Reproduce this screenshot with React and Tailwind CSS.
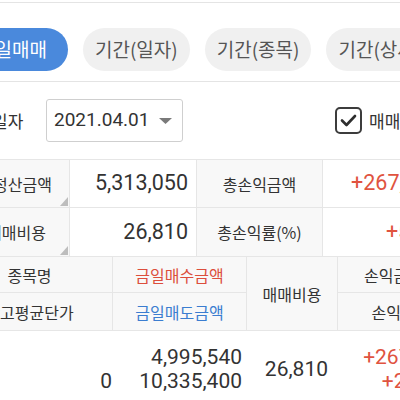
import React from "react";

function Corner() {
  return (
    <svg className="absolute right-[1px] bottom-[1px]" width="8" height="9" viewBox="0 0 8 9">
      <polygon points="8,0 8,9 0,9" fill="#bdbdbd" />
    </svg>
  );
}

export default function App() {
  const cell = "border-r border-b border-[#e6e6e6] flex items-center whitespace-nowrap";
  const num = "font-[Roboto,'Noto_Sans_CJK_KR',sans-serif]";
  const kr = "font-['Noto_Sans_CJK_KR',sans-serif]";
  const pill = "shrink-0 h-[43px] rounded-full bg-[#f0f0f0] text-[#555] text-[19px] flex items-center px-[12px]";
  return (
    <div className={`w-[400px] h-[400px] overflow-hidden bg-white text-[#333] ${kr}`}>
      <div className="h-[2px]" />
      {/* tabs */}
      <div className="border-t border-b border-[#e4e4e4] pt-[25px] pb-[10px]">
        <div className="flex gap-[15px] ml-[-35px] whitespace-nowrap">
          <div className="shrink-0 h-[43px] rounded-full bg-[#4a89dc] text-white text-[19px] flex items-center pl-[12px] pr-[21px]">
            금일매매
          </div>
          <div className={pill}>기간(일자)</div>
          <div className={pill}>기간(종목)</div>
          <div className={pill}>기간(상세)</div>
        </div>
      </div>
      {/* date row */}
      <div className="h-[77px] flex items-center whitespace-nowrap">
        <span className="shrink-0 w-[54px] ml-[-8px] text-[17px]">일자</span>
        <div className="shrink-0 w-[137px] h-[43px] border border-[#cfcfcf] rounded-[3px] flex items-center pl-[7px] pr-[10px] justify-between">
          <span className={`text-[19px] text-[#333] ${num}`}>2021.04.01</span>
          <svg width="13" height="6" viewBox="0 0 13 6">
            <polygon points="0,0 13,0 6.5,6" fill="#7a7a7a" />
          </svg>
        </div>
        <div className="shrink-0 ml-[152px] w-[27px] h-[27px] border-2 border-[#3c3c3c] rounded-[5px] flex items-center justify-center">
          <svg width="17" height="13" viewBox="0 0 17 13">
            <path d="M2 6.5 L6.5 11 L15 2" fill="none" stroke="#2e2e2e" strokeWidth="2.6" strokeLinecap="round" strokeLinejoin="round" />
          </svg>
        </div>
        <span className="shrink-0 ml-[7px] text-[17px] text-[#333]">매매내역</span>
      </div>
      {/* summary */}
      <div className="border-t border-[#e6e6e6] grid grid-cols-[70px_127px_126px_126px] grid-rows-[48px_49px] w-[449px]">
        <div className={`${cell} relative bg-[#f8f8f8] justify-end pr-[17px] overflow-hidden text-[16px]`}>
          총정산금액
          <Corner />
        </div>
        <div className={`${cell} justify-end pr-[8px] text-[21.5px] ${num}`}>5,313,050</div>
        <div className={`${cell} bg-[#f8f8f8] justify-center text-[16px]`}>총손익금액</div>
        <div className={`${cell} justify-end pr-[8px] text-[21.5px] text-[#e0533f] ${num}`}>+267,250</div>
        <div className={`${cell} relative bg-[#f8f8f8] justify-end pr-[23px] overflow-hidden text-[16px]`}>
          총매매비용
          <Corner />
        </div>
        <div className={`${cell} justify-end pr-[8px] text-[21.5px] ${num}`}>26,810</div>
        <div className={`${cell} bg-[#f8f8f8] justify-center text-[16px]`}>총손익률(%)</div>
        <div className={`${cell} justify-end pr-[8px] text-[21.5px] text-[#e0533f] ${num}`}>+5.35</div>
      </div>
      {/* list header */}
      <div className="ml-[-53px] grid grid-cols-[166px_134px_91px_112px] grid-rows-[36px_38px] w-[503px] text-[16px]">
        <div className={`${cell} bg-[#f8f8f8] justify-center`}>종목명</div>
        <div className={`${cell} bg-[#f8f8f8] justify-center text-[#dc4e3c]`}>금일매수금액</div>
        <div className={`${cell} bg-[#f8f8f8] justify-center row-span-2`}>매매비용</div>
        <div className={`${cell} bg-[#f8f8f8] justify-center`}>손익금액</div>
        <div className={`${cell} bg-[#f8f8f8] justify-center`}>잔고평균단가</div>
        <div className={`${cell} bg-[#f8f8f8] justify-center text-[#3b7dd0]`}>금일매도금액</div>
        <div className={`${cell} bg-[#f8f8f8] justify-center`}>손익률</div>
      </div>
      {/* data row */}
      <div className={`ml-[-53px] grid grid-cols-[166px_134px_91px_120px] w-[511px] pt-[14px] text-[21px] leading-[24px] whitespace-nowrap ${num}`}>
        <div className="flex flex-col items-end pr-[1px]">
          <span>&nbsp;</span>
          <span>0</span>
        </div>
        <div className="flex flex-col items-end pr-[5px]">
          <span>4,995,540</span>
          <span>10,335,400</span>
        </div>
        <div className="flex items-center justify-end pr-[10px]">26,810</div>
        <div className="flex flex-col items-end pr-[8px] text-[#e0533f]">
          <span>+267,250</span>
          <span>+2.68%</span>
        </div>
      </div>
    </div>
  );
}
